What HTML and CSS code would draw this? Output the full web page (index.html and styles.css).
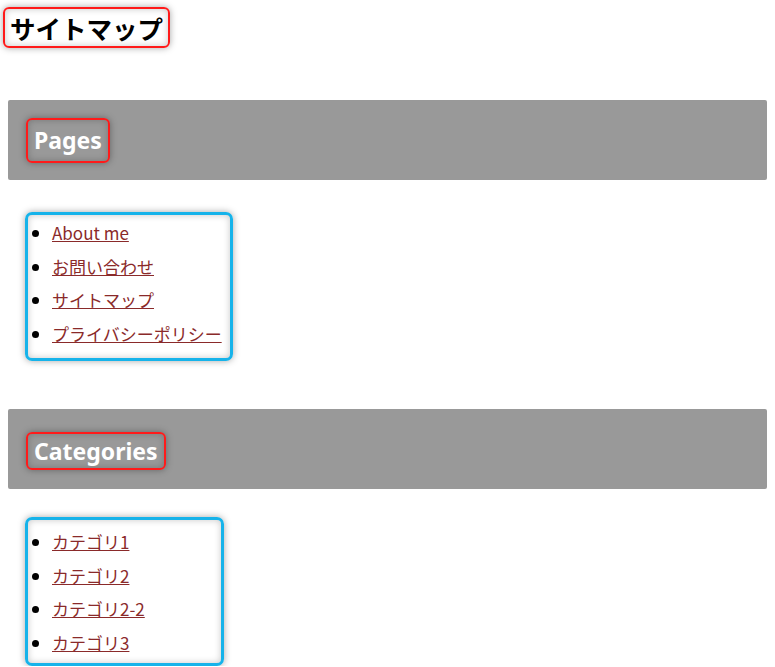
FILE: index.html
```html
<!DOCTYPE html>
<html lang="ja">
<head>
<meta charset="utf-8">
<title>サイトマップ</title>
<link rel="stylesheet" href="styles.css">
</head>
<body>
<h1 class="page-title">サイトマップ</h1>

<section class="section section-pages">
  <div class="section-bar">
    <h2 class="section-heading">Pages</h2>
  </div>
  <ul class="link-list">
    <li><a href="#">About me</a></li>
    <li><a href="#">お問い合わせ</a></li>
    <li><a href="#">サイトマップ</a></li>
    <li><a href="#">プライバシーポリシー</a></li>
  </ul>
</section>

<section class="section section-categories">
  <div class="section-bar">
    <h2 class="section-heading">Categories</h2>
  </div>
  <ul class="link-list">
    <li><a href="#">カテゴリ1</a></li>
    <li><a href="#">カテゴリ2</a></li>
    <li><a href="#">カテゴリ2-2</a></li>
    <li><a href="#">カテゴリ3</a></li>
  </ul>
</section>
</body>
</html>
```

FILE: styles.css
```css
html, body {
  margin: 0;
  padding: 0;
  background: #ffffff;
}

body {
  font-family: "Noto Sans", "Noto Sans CJK JP", sans-serif;
  color: #000;
}

.page-title {
  display: inline-block;
  margin: 7px 0 0 3px;
  padding: 0 5px;
  height: 37px;
  line-height: 37px;
  font-size: 25.5px;
  font-weight: 700;
  font-family: "Noto Sans CJK JP", sans-serif;
  border: 2px solid #ff1a1a;
  border-radius: 6px;
  box-shadow: 0 0 7px rgba(0,0,0,0.35), inset 0 0 7px rgba(0,0,0,0.22);
}

.section {
  margin: 0 8px;
}

.section-pages {
  margin-top: 52px;
}

.section-categories {
  margin-top: 48px;
}

.section-bar {
  background: #999999;
  border-radius: 2px;
  height: 80px;
  box-sizing: border-box;
  padding: 18px;
}

.section-categories .section-bar {
  padding-top: 23px;
}

.section-heading {
  display: inline-block;
  margin: 0;
  padding: 0 6px;
  height: 41px;
  line-height: 40px;
  font-size: 23px;
  font-weight: 700;
  color: #ffffff;
  border: 2px solid #ff1a1a;
  border-radius: 6px;
  box-shadow: 0 0 7px rgba(0,0,0,0.35), inset 0 0 7px rgba(0,0,0,0.22);
}

.section-categories .section-heading {
  height: 34px;
  line-height: 34px;
}

.link-list {
  display: inline-block;
  margin: 32px 0 0 17px;
  padding: 1px 8px 7px 24px;
  border: 3px solid #16b3ea;
  border-radius: 7px;
  box-shadow: 0 0 7px rgba(0,0,0,0.35), inset 0 0 7px rgba(0,0,0,0.22);
  font-size: 17px;
  line-height: 33.7px;
  font-family: "Noto Sans CJK JP", sans-serif;
}

.section-categories .link-list {
  margin-top: 28px;
  padding-top: 5px;
  padding-bottom: 3px;
  width: 161px;
}

.link-list li {
  margin: 0;
}

.link-list a {
  color: #8a2a2a;
  text-decoration: underline;
}
```
